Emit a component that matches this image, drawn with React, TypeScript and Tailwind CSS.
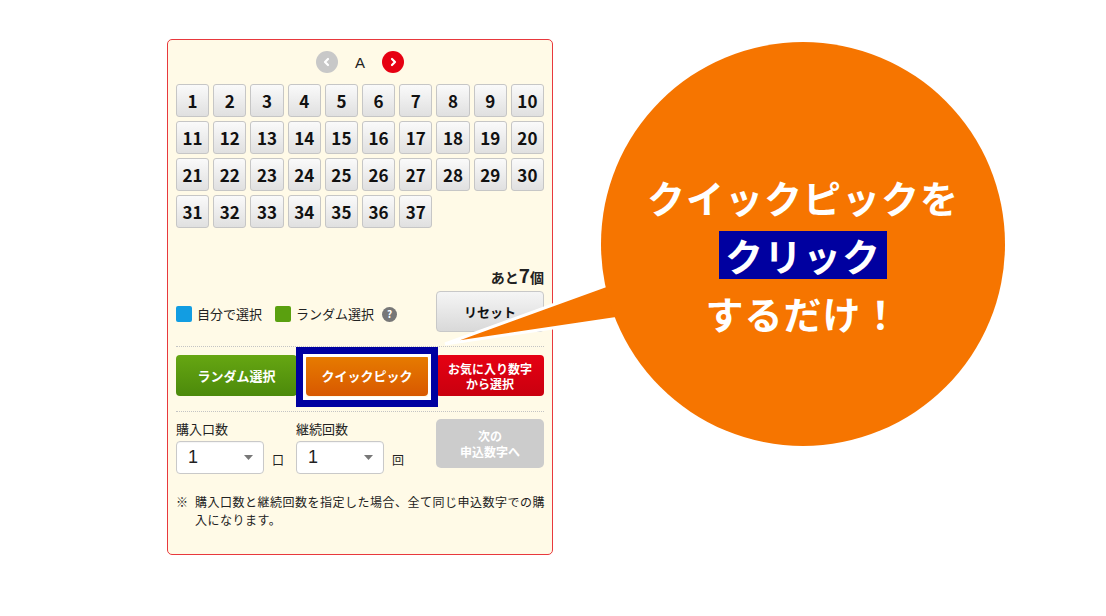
import React from 'react';

const numbers = Array.from({ length: 37 }, (_, i) => i + 1);

function Chevron({ dir }: { dir: 'left' | 'right' }) {
    return (
        <svg width="10" height="10" viewBox="0 0 10 10">
            <polyline
                points={dir === 'left' ? '6,2 3,5 6,8' : '4,2 7,5 4,8'}
                fill="none"
                stroke="white"
                strokeWidth={2.2}
                strokeLinecap="round"
                strokeLinejoin="round"
            />
        </svg>
    );
}

function Caret() {
    return (
        <svg width="9" height="5" viewBox="0 0 9 5">
            <polygon points="0,0 9,0 4.5,5" fill="#777" />
        </svg>
    );
}

function Select({ unit }: { unit: string }) {
    return (
        <div className="flex items-end gap-[8px]">
            <div className="w-[88px] h-[33px] bg-white border border-[#c9c9c9] rounded-[4px] flex items-center justify-between pl-[11px] pr-[10px] shadow-[inset_0_1px_1px_rgba(0,0,0,0.04)]">
                <span className="text-[18px] font-['Liberation_Sans',sans-serif] text-[#222]">1</span>
                <Caret />
            </div>
            <span className="text-[12px] leading-none mb-[8px] text-[#222]">{unit}</span>
        </div>
    );
}

export default function App() {
    return (
        <div className="relative w-[1106px] h-[616px] bg-white overflow-hidden font-['Noto_Sans_CJK_JP','Noto_Sans',sans-serif] text-[#222]">
            <div className="pt-[39px] pl-[167px]">
                {/* Panel */}
                <div className="w-[386px] h-[516px] border border-[#e8383d] rounded-[5px] bg-[#fffae7] px-[8px]">
                    {/* Pager */}
                    <div className="flex items-center justify-center gap-[16px] pt-[11px] h-[33px]">
                        <div className="w-[22px] h-[22px] rounded-full bg-[#c8c8c8] flex items-center justify-center">
                            <Chevron dir="left" />
                        </div>
                        <span className="text-[15px] leading-none w-[12px] text-center font-['Liberation_Sans',sans-serif]">A</span>
                        <div className="w-[22px] h-[22px] rounded-full bg-[#e60012] flex items-center justify-center">
                            <Chevron dir="right" />
                        </div>
                    </div>

                    {/* Number grid */}
                    <div className="grid grid-cols-10 gap-[4px] mt-[11px]">
                        {numbers.map((n) => (
                            <div
                                key={n}
                                className="h-[33px] rounded-[3px] border border-[#c6c6c6] bg-gradient-to-b from-[#fafafa] to-[#e0e0e0] flex items-center justify-center text-[17px] font-bold text-[#111]"
                            >
                                {n}
                            </div>
                        ))}
                    </div>

                    {/* Remaining */}
                    <div className="flex justify-end items-baseline mt-[37px] h-[20px] font-bold text-[14px]">
                        あと<span className="text-[19px] leading-none">7</span>個
                    </div>

                    {/* Legend + reset */}
                    <div className="flex items-center justify-between mt-[6px]">
                        <div className="flex items-center text-[13px] mt-[5px]">
                            <span className="w-[16px] h-[16px] rounded-[2px] bg-[#129de2]" />
                            <span className="ml-[5px]">自分で選択</span>
                            <span className="w-[16px] h-[16px] rounded-[2px] bg-[#5aa00f] ml-[13px]" />
                            <span className="ml-[5px]">ランダム選択</span>
                            <span className="ml-[8px] w-[15px] h-[15px] rounded-full bg-[#777] text-white text-[10px] font-bold flex items-center justify-center leading-none">?</span>
                        </div>
                        <div className="w-[108px] h-[41px] rounded-[4px] border border-[#c8c8c8] bg-gradient-to-b from-[#f5f5f5] to-[#d9d9d9] flex items-center justify-center text-[13px] font-bold text-[#111]">
                            リセット
                        </div>
                    </div>

                    <div className="border-t border-dotted border-[#c4c4c4] mt-[14px]" />

                    {/* Action buttons */}
                    <div className="flex mt-[8px]">
                        <div className="w-[121px] h-[41px] rounded-[4px] bg-gradient-to-b from-[#66a612] to-[#4c8a0b] flex items-center justify-center text-white font-bold text-[13px]">
                            ランダム選択
                        </div>
                        <div className="w-[122px] h-[41px] ml-[9px] rounded-[4px] bg-gradient-to-b from-[#e77c00] to-[#d85800] flex items-center justify-center text-white font-bold text-[13px]">
                            クイックピック
                        </div>
                        <div className="w-[108px] h-[41px] ml-[8px] rounded-[4px] bg-gradient-to-b from-[#e60012] to-[#c9000f] flex flex-col items-center justify-center text-white font-bold text-[12px] leading-[15px]">
                            <span>お気に入り数字</span>
                            <span>から選択</span>
                        </div>
                    </div>

                    <div className="border-t border-dotted border-[#c4c4c4] mt-[15px]" />

                    {/* Quantity */}
                    <div className="flex justify-between mt-[7px]">
                        <div className="flex gap-[8px] pt-[1px]">
                            <div className="w-[112px]">
                                <div className="text-[13px] leading-[18px]">購入口数</div>
                                <div className="mt-[3px]">
                                    <Select unit="口" />
                                </div>
                            </div>
                            <div>
                                <div className="text-[13px] leading-[18px]">継続回数</div>
                                <div className="mt-[3px]">
                                    <Select unit="回" />
                                </div>
                            </div>
                        </div>
                        <div className="w-[108px] h-[49px] rounded-[5px] bg-[#cccccc] flex flex-col items-center justify-center text-white font-bold text-[12px] leading-[16px]">
                            <span>次の</span>
                            <span>申込数字へ</span>
                        </div>
                    </div>

                    {/* Note */}
                    <div className="flex mt-[19px] text-[12px] leading-[18px] tracking-[0.5px]">
                        <span className="w-[19px] shrink-0">※</span>
                        <span className="whitespace-nowrap">
                            購入口数と継続回数を指定した場合、全て同じ申込数字での購
                            <br />
                            入になります。
                        </span>
                    </div>
                </div>
            </div>

            {/* Highlight frame around quick pick */}
            <div className="absolute left-[296px] top-[347px] w-[142px] h-[60px] border-[7px] border-[#0000a0]">
                <div className="w-full h-full border-[3px] border-white" />
            </div>

            {/* Speech bubble tail */}
            <svg className="absolute left-0 top-0" width="1106" height="616" viewBox="0 0 1106 616">
                <polygon points="445,344 660,266 660,312" fill="#f67500" stroke="white" strokeWidth={3} strokeLinejoin="miter" />
            </svg>

            {/* Speech bubble */}
            <div className="absolute left-[601px] top-[42px] w-[404px] h-[404px] rounded-full bg-[#f67500] flex flex-col items-center pt-[126px] text-white font-bold">
                <div className="h-[58px] flex items-center text-[38px] tracking-[1px] leading-none">クイックピックを</div>
                <div className="h-[58px] flex items-center">
                    <span className="bg-[#0000a0] px-[6px] h-[48px] flex items-center text-[38px] tracking-[1px] leading-none">クリック</span>
                </div>
                <div className="h-[58px] flex items-center text-[38px] tracking-[1px] leading-none">するだけ！</div>
            </div>
        </div>
    );
}
